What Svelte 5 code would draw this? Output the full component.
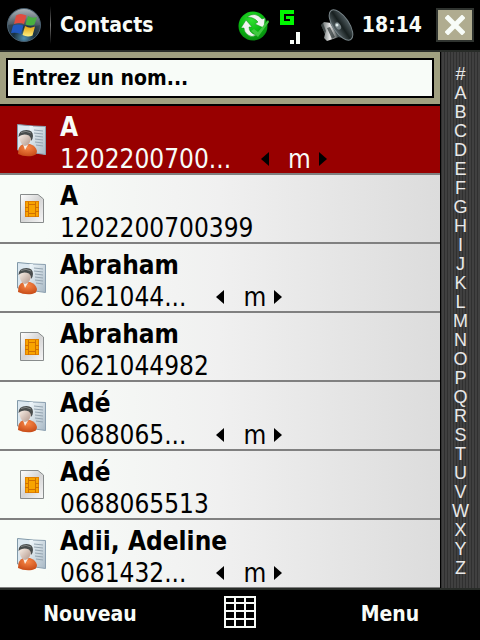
<script>
    const letters = '#ABCDEFGHIJKLMNOPQRSTUVWXYZ'.split('');

    const contacts = [
        { name: 'A', phone: '1202200700...', type: 'person' },
        { name: 'A', phone: '1202200700399', type: 'sim' },
        { name: 'Abraham', phone: '0621044...', type: 'person' },
        { name: 'Abraham', phone: '0621044982', type: 'sim' },
        { name: 'Adé', phone: '0688065...', type: 'person' },
        { name: 'Adé', phone: '0688065513', type: 'sim' },
        { name: 'Adii, Adeline', phone: '0681432...', type: 'person' }
    ];

    let selected = $state(0);
    let query = $state('Entrez un nom...');
</script>

<div class="screen">
    <header>
        <button class="start" aria-label="Start">
            <svg width="36" height="36" viewBox="0 0 36 36">
                <defs>
                    <radialGradient id="orb" cx="50%" cy="90%" r="80%">
                        <stop offset="0" stop-color="#4f8fb0" />
                        <stop offset="0.4" stop-color="#183040" />
                        <stop offset="1" stop-color="#505c64" />
                    </radialGradient>
                    <linearGradient id="shine" x1="0" y1="0" x2="0" y2="1">
                        <stop offset="0" stop-color="#d0d8dc" stop-opacity="0.7" />
                        <stop offset="1" stop-color="#a0a8b0" stop-opacity="0.15" />
                    </linearGradient>
                    <linearGradient id="yellow" x1="0" y1="0" x2="0" y2="1">
                        <stop offset="0" stop-color="#e0a010" />
                        <stop offset="1" stop-color="#fff080" />
                    </linearGradient>
                </defs>
                <circle cx="18" cy="18" r="16.500" fill="url(#orb)" stroke="#4a6070" />
                <path d="M2 18a16 16 0 0 1 32 0c-9 3 -22 -2 -32 0z" fill="url(#shine)" />
                <path d="M10 8.500q4 -3 10.500 0l-2.500 8.500q-5 -2 -10 0z" fill="#e04c40" />
                <path d="M22 9q4.500 3 9 1l-2.500 7.500q-4 2 -9 0z" fill="#48b040" />
                <path d="M7 18.500q5 -2 10.500 0l-2.500 8.500q-5 -2 -10 -1z" fill="#2058c0" />
                <path d="M19 19q5 3 10 0.500l-2.500 9q-5 2 -10 -0.500z" fill="url(#yellow)" />
            </svg>
        </button>
        <span class="divider"></span>
        <h1>Contacts</h1>
        <div class="status">
            <svg width="32" height="32" viewBox="0 0 32 32">
                <defs>
                    <radialGradient id="sync" cx="45%" cy="30%" r="70%">
                        <stop offset="0" stop-color="#30e030" />
                        <stop offset="0.6" stop-color="#08b810" />
                        <stop offset="1" stop-color="#088810" />
                    </radialGradient>
                </defs>
                <circle cx="15" cy="17" r="14.500" fill="url(#sync)" />
                <path d="M9 8q8 -6 15 2l3 -1l-1 10l-9 -4l3 -2q-4 -5 -11 -5z" fill="#f0f4f0" stroke="#108818" stroke-width="0.500" />
                <path d="M3 19l5 -8l6 7h-3q0 6 7 8q-4 3 -8 0q-4 -3 -4 -7z" fill="#f0f4f0" stroke="#108818" stroke-width="0.500" />
                <path d="M13 22l3 -2l4 3l10 -12l1 2l-11 15z" fill="#40c840" />
            </svg>
            <svg width="22" height="38" viewBox="0 0 22 38" shape-rendering="crispEdges">
                <path d="M2 4h14v4h-10v7h6v-2h-4v-3h8v9h-14z" fill="#00f800" />
                <path d="M12 34h4v4h-4zM18 26h4v12h-4z" fill="#f8fcf8" />
            </svg>
            <svg class="speaker" width="34" height="34" viewBox="0 0 34 34">
                <defs>
                    <linearGradient id="cone" x1="0" y1="0" x2="1" y2="0">
                        <stop offset="0" stop-color="#586468" />
                        <stop offset="0.5" stop-color="#182020" />
                        <stop offset="1" stop-color="#505c60" />
                    </linearGradient>
                    <linearGradient id="magnet" x1="0" y1="0" x2="1" y2="0">
                        <stop offset="0" stop-color="#505858" />
                        <stop offset="0.5" stop-color="#e8e8e8" />
                        <stop offset="1" stop-color="#303838" />
                    </linearGradient>
                </defs>
                <path d="M1 17l3 -3l7 1l8 14l-6 2l-6 2l-3 -3l1 -4z" fill="url(#magnet)" />
                <path d="M1 17l2 -2l3 8l-1 3zM7 20l3 -1l5 10l-3 2z" fill="#283030" opacity="0.7" />
                <path d="M10 15L10 3L30 32L18 29z" fill="#404c50" />
                <ellipse cx="21" cy="17" rx="8" ry="17.500" transform="rotate(-34 21 17)" fill="url(#cone)" stroke="#788488" />
                <ellipse cx="18" cy="18" rx="2.500" ry="4" transform="rotate(-34 18 18)" fill="#788488" />
                <circle cx="17" cy="17" r="1.500" fill="#e0ecec" />
            </svg>
            <time>18:14</time>
            <button class="close" aria-label="Close">
                <svg width="20" height="20" viewBox="0 0 20 20">
                    <path d="M3 3L17 17M17 3L3 17" stroke="#f8fcf8" stroke-width="5" stroke-linecap="square" />
                </svg>
            </button>
        </div>
    </header>

    <main>
        <div class="content">
            <div class="search">
                <input type="text" aria-label="Entrez un nom" bind:value={query} />
            </div>
            <ul>
                {#each contacts as contact, i}
                    <li class:selected={i === selected}>
                        <button class="icon" aria-label={contact.name} onclick={() => (selected = i)}>
                            {#if contact.type === 'person'}
                                <svg width="30" height="34" viewBox="0 0 30 34">
                                    <defs>
                                        <linearGradient id="paper{i}" x1="0" y1="0" x2="1" y2="1">
                                            <stop offset="0" stop-color="#f0f8fc" />
                                            <stop offset="1" stop-color="#a8b8c4" />
                                        </linearGradient>
                                        <radialGradient id="shirt{i}" cx="50%" cy="30%" r="70%">
                                            <stop offset="0" stop-color="#f88848" />
                                            <stop offset="1" stop-color="#c84c18" />
                                        </radialGradient>
                                        <linearGradient id="face{i}" x1="0" y1="0" x2="1" y2="1">
                                            <stop offset="0" stop-color="#fcf4ec" />
                                            <stop offset="1" stop-color="#b09488" />
                                        </linearGradient>
                                    </defs>
                                    <path d="M0.500 1.500L16 3V29L0.500 27z" fill="#dce8f0" stroke="#8098a8" />
                                    <path d="M12 3L28.500 3.500V31.500L12 29z" fill="#e4ecf0" />
                                    <path d="M13 3L28.500 3.500V31.500L13 29z" fill="url(#paper{i})" />
                                    <path d="M16 3L28.500 3.500V31.500L18 30" fill="none" stroke="#8ca0b0" />
                                    <path d="M17 7l9 1M17 10l9 1M18 13l8 1M18 16l8 1M18 19l8 1M19 22l7 1" stroke="#94a4b0" />
                                    <path d="M1 31q0 -8 5 -10h7q6 2 7 7q0 4 -5 5q-8 1 -14 -2z" fill="url(#shirt{i})" />
                                    <path d="M6 21l2 6l4 -7z" fill="#f8f0e8" />
                                    <path d="M2 13q6 -5 12 0q0 9 -6 10q-5 -1 -6 -10z" fill="url(#face{i})" />
                                    <path d="M1.500 14q0 -7 8 -7q6.500 0 6.500 6q0 3 -2 5q0 -4 -2 -5.500q-4 -1.500 -7 -0.500q-2 0.500 -3.500 2z" fill="#484c4c" />
                                    <path d="M4 9.500q5 -2.500 10 0.500" fill="none" stroke="#808484" />
                                </svg>
                            {:else}
                                <svg width="24" height="29" viewBox="0 0 24 29">
                                    <defs>
                                        <linearGradient id="card{i}" x1="0" y1="0" x2="1" y2="1">
                                            <stop offset="0" stop-color="#ffffff" />
                                            <stop offset="0.5" stop-color="#d4d4d4" />
                                            <stop offset="1" stop-color="#f8f8f8" />
                                        </linearGradient>
                                    </defs>
                                    <path d="M0.500 0.500H18L23.500 5V28.500H0.500z" fill="url(#card{i})" stroke="#888c8c" />
                                    <rect x="5.500" y="7.500" width="13" height="15" fill="#f8a400" stroke="#e08000" />
                                    <path d="M8.500 8v15M15.500 8v15M8.500 10.500h7M8.500 19.500h7M5 13.500h3.500M5 17.500h3.500M15.500 13.500h3.500M15.500 17.500h3.500" stroke="#d07000" />
                                </svg>
                            {/if}
                        </button>
                        <div class="details">
                            <strong>{contact.name}</strong>
                            <div class="line">
                                <span>{contact.phone}</span>
                                {#if contact.type === 'person'}
                                    <button class="arrow prev" aria-label="Previous number">
                                        <svg width="8" height="14" viewBox="0 0 8 14"><path d="M8 0V14L0 7z" /></svg>
                                    </button>
                                    <span>m</span>
                                    <button class="arrow next" aria-label="Next number">
                                        <svg width="8" height="14" viewBox="0 0 8 14"><path d="M0 0V14L8 7z" /></svg>
                                    </button>
                                {/if}
                            </div>
                        </div>
                    </li>
                {/each}
            </ul>
        </div>
        <nav>
            {#each letters as letter}
                <button>{letter}</button>
            {/each}
        </nav>
    </main>

    <footer>
        <button>Nouveau</button>
        <button class="keypad" aria-label="Keyboard">
            <svg width="32" height="32" viewBox="0 0 32 32" shape-rendering="crispEdges">
                <path d="M1 1H31V31H1zM11 1V31M21 1V31M1 7H31M1 15H31M1 23H31" fill="none" stroke="#f8fcf8" stroke-width="2" />
            </svg>
        </button>
        <button>Menu</button>
    </footer>
</div>

<style>
    :global(body) {
        background: #000;
    }
    .screen {
        font-family: "DejaVu Sans Condensed", "Noto Sans", sans-serif;
        font-size: 21px;
        color: #f8fcf8;
        background: #000;
    }
    button {
        display: block;
        padding: 0;
        border: 0;
        background: none;
        color: inherit;
        font: inherit;
        cursor: pointer;
    }
    svg {
        display: block;
    }
    header {
        display: flex;
        align-items: center;
        height: 50px;
        padding: 0 6px;
        border-bottom: 2px solid #282c28;
    }
    .divider {
        width: 1px;
        height: 38px;
        margin: 0 9px 0 8px;
        background: linear-gradient(#000, #787878, #000);
    }
    h1 {
        margin: 0;
        font-size: 21px;
        font-weight: bold;
    }
    .status {
        display: flex;
        align-items: center;
        margin-left: auto;
    }
    .status svg {
        margin-right: 8px;
    }
    .status .speaker {
        margin: 0 8px 0 12px;
    }
    time {
        font-weight: bold;
    }
    .close {
        display: flex;
        align-items: center;
        justify-content: center;
        width: 38px;
        height: 34px;
        margin-left: 14px;
        border: 2px solid #303430;
        background: #b0ac90;
    }
    .status .close svg {
        margin: 0;
    }
    main {
        display: flex;
        border-bottom: 2px solid #282c28;
    }
    .content {
        flex: 1;
        min-width: 0;
    }
    .search {
        padding: 6px;
        background: #a0a080;
        border-bottom: 2px solid #000;
    }
    input {
        display: block;
        box-sizing: border-box;
        width: 100%;
        height: 40px;
        padding: 0 4px;
        border: 2px solid #000;
        border-radius: 0;
        outline: 0;
        background: #f8fcf8;
        color: #000;
        font: inherit;
        font-weight: bold;
    }
    ul {
        margin: 0;
        padding: 0;
        list-style: none;
    }
    li {
        display: flex;
        align-items: center;
        height: 67px;
        border-bottom: 2px solid #808080;
        background: linear-gradient(to right, #f8fcf8 10%, #f0f0f0 50%, #dcdcdc);
        color: #000;
    }
    li:last-child {
        border-bottom-width: 1px;
    }
    li.selected {
        background: #980000;
        color: #f8fcf8;
    }
    .icon {
        display: flex;
        justify-content: center;
        width: 60px;
        padding-left: 3px;
    }
    .details {
        padding-top: 6px;
        font-size: 26px;
        line-height: 32px;
    }
    strong {
        display: block;
    }
    .line {
        display: flex;
        align-items: center;
    }
    .arrow {
        color: #000;
        fill: currentColor;
    }
    .prev {
        margin: 0 19px 0 30px;
    }
    .next {
        margin-left: 8px;
    }
    nav {
        box-sizing: border-box;
        width: 40px;
        padding-top: 13px;
        border-left: 1px solid #000;
        background: repeating-linear-gradient(to right, #303030 0 1px, #404040 1px 3px);
        color: #e8e8e8;
        font-family: "Liberation Sans", Arial, sans-serif;
        font-size: 18px;
        line-height: 19px;
    }
    nav button {
        width: 100%;
        text-align: center;
    }
    footer {
        display: grid;
        grid-template-columns: 1fr 120px 1fr;
        align-items: center;
        height: 48px;
        font-weight: bold;
    }
    .keypad {
        justify-self: center;
        padding-bottom: 4px;
    }
</style>
